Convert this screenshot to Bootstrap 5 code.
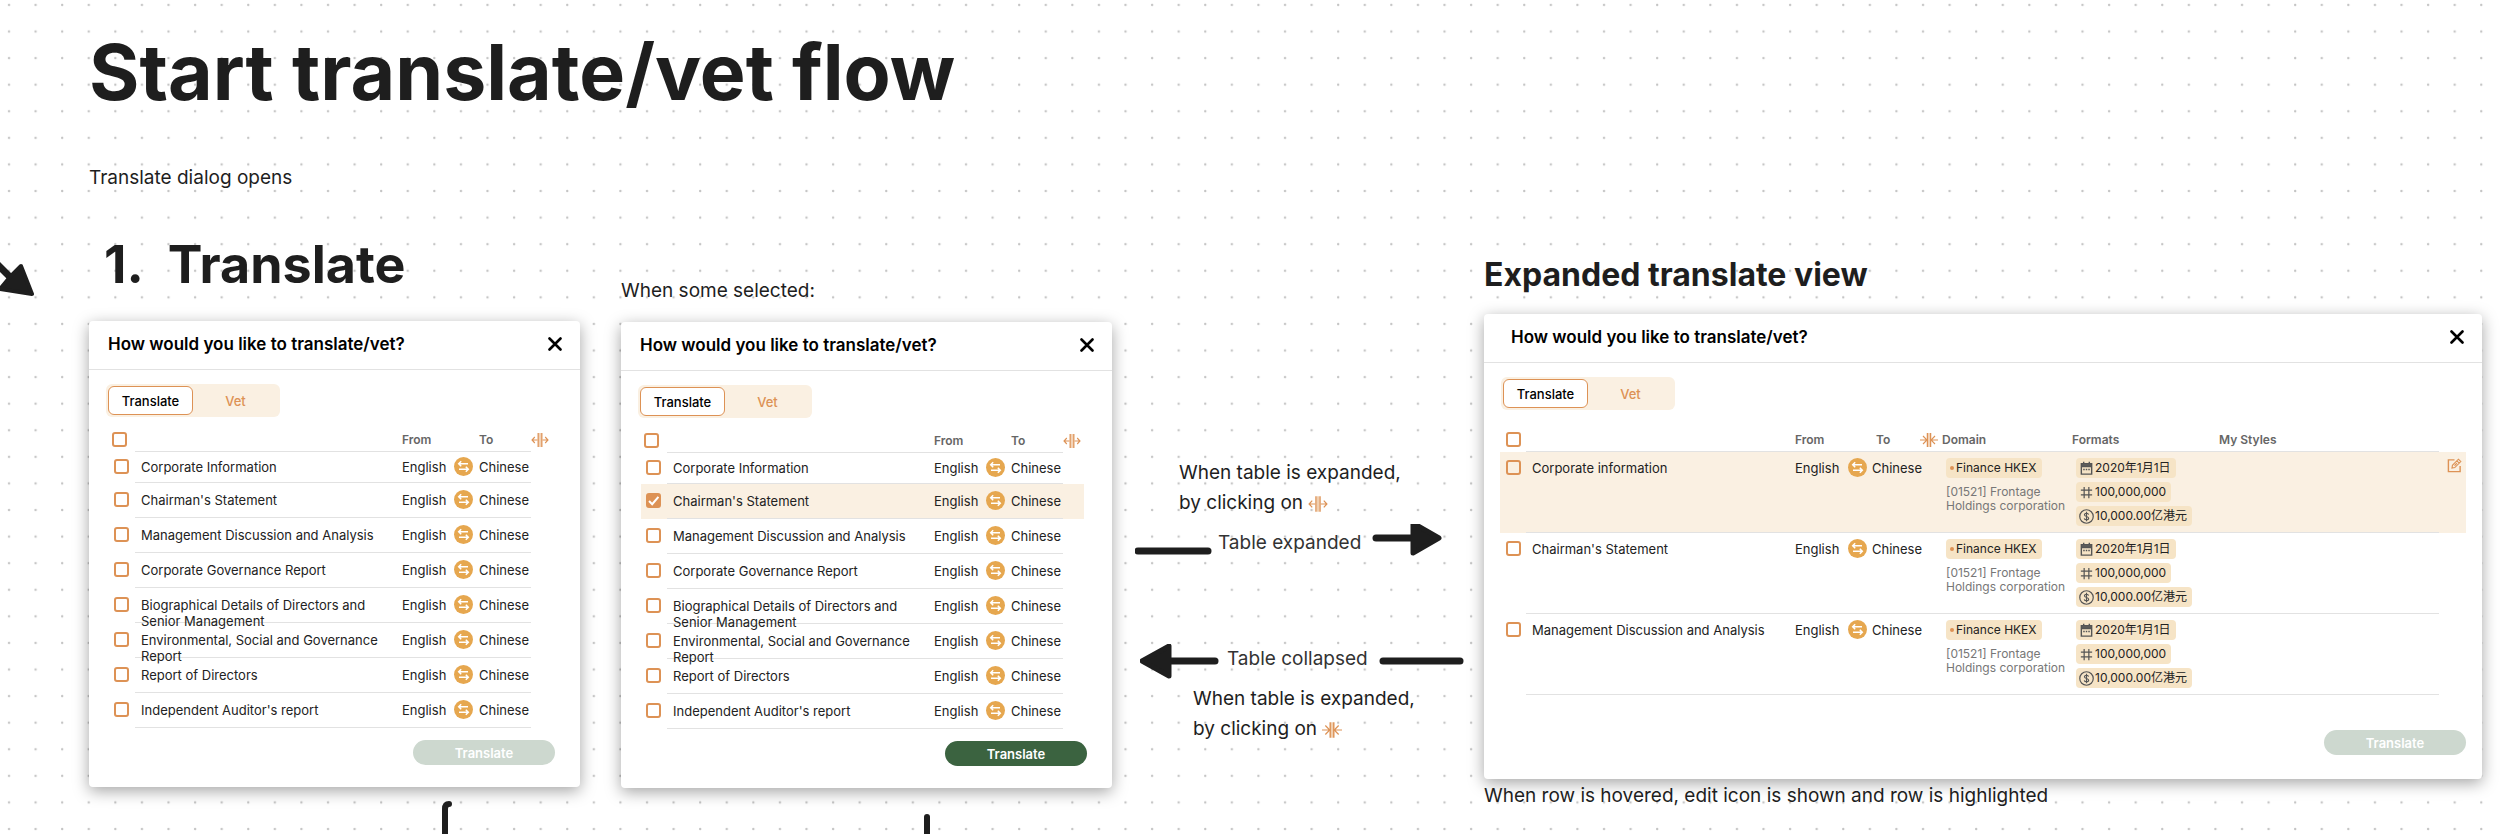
<!DOCTYPE html>
<html lang="en">
<head>
<meta charset="utf-8">
<meta name="viewport" content="width=device-width, initial-scale=1">
<title>Start translate/vet flow</title>
<link rel="stylesheet" href="https://cdn.jsdelivr.net/npm/bootstrap@5.3.0/dist/css/bootstrap.min.css">
<style>
  :root { --ink:#1e1e1e; --accent:#dd9255; --amber:#e6a74f; --cream:#faf0e2; --tag:#f6e4c6; --rule:#e2e2e2; }
  body { font-family:Inter,"Noto Sans CJK SC",sans-serif; color:var(--ink); background:#fff; overflow-x:hidden; }
  .board {
    position:relative; overflow:hidden; min-height:100vh; padding:0 22px 0 89px;
    background-image:url("data:image/svg+xml,%3Csvg xmlns='http://www.w3.org/2000/svg' width='319' height='319'%3E%3Cdefs%3E%3Cpattern id='d' width='26.583' height='26.583' patternUnits='userSpaceOnUse'%3E%3Ccircle cx='9' cy='5' r='1.2' fill='%23c4c4c4'/%3E%3C/pattern%3E%3C/defs%3E%3Crect width='319' height='319' fill='url(%23d)'/%3E%3C/svg%3E");
  }
  h1 { font-size:77px; line-height:96px; font-weight:700; margin:0; padding-top:24px; }
  .copy { font-size:19px; line-height:30px; margin:0; }
  .intro { padding-top:43px; }
  .frames { display:grid; grid-template-columns:minmax(0,491fr) minmax(0,41fr) minmax(0,491fr) minmax(0,372fr) minmax(0,998fr); padding-top:28px; }
  .frames > :nth-child(2) { grid-column:3; }
  .heading-slot { height:100px; }
  .heading-slot.lower { height:101px; padding-bottom:16px; }
  .heading-slot.upper { height:93px; padding-bottom:19px; }
  .step-title { font-size:52px; line-height:64px; font-weight:700; gap:24px; margin:0; padding:0 0 24px 15px; }
  .view-title { font-size:32px; line-height:40px; font-weight:700; margin:0; }

  .dialog { background:#fff; border-radius:4px; box-shadow:0 4px 16px rgba(0,0,0,.36); color:#222; }
  .dialog-top { height:49px; border-bottom:1px solid var(--rule); padding:0 18px 2px 19px; color:#000; }
  .dialog-top h3 { font-size:17px; line-height:24px; font-weight:600; margin:0; }
  .bare { border:0; padding:0; background:none; display:block; line-height:0; }
  .toggle { width:174px; height:33px; margin:14px 0 0 17px; padding:2px; border-radius:6px; background:var(--cream); }
  .toggle button { flex:1; border:1px solid transparent; border-radius:6px; background:none; color:var(--accent); font-size:13px; line-height:16px; font-weight:500; padding:0; }
  .toggle .on { flex:0 0 85px; background:#fff; border-color:var(--accent); color:#000; }
  .docs { table-layout:fixed; margin:0 28px 0 20px; width:calc(100% - 48px); border-collapse:separate; border-spacing:0; font-size:13px; line-height:16px; }
  .docs th, .docs td { padding:0; vertical-align:top; font-weight:400; text-align:left; }
  .docs .rule { border-bottom:1px solid var(--rule); }
  .docs thead th { height:35px; padding-top:15px; font-size:12px; line-height:16px; font-weight:600; color:#666; }
  .docs tbody td, .docs tbody th { height:35px; padding-top:9px; }
  .docs .short > * { height:31px; padding-top:7px; }
  .docs .title-cell { padding-left:6px; }
  .docs .one-line { height:16px; position:relative; z-index:1; }
  .docs .chosen { background:var(--cream); }
  .tick { appearance:none; display:block; width:15px; height:15px; margin:0 0 0 5px; border:2px solid var(--accent); border-radius:3px; background:transparent; }
  .docs thead .tick { margin-left:3px; }
  .tick:checked { background:var(--accent) url("data:image/svg+xml,%3Csvg xmlns='http://www.w3.org/2000/svg' viewBox='0 0 12 12'%3E%3Cpath d='M1.5 6.3l3 3 6-7' fill='none' stroke='white' stroke-width='2'/%3E%3C/svg%3E") center/12px no-repeat; }
  .swap { width:19px; height:19px; margin:-2px 0; display:block; }
  .go { width:142px; height:25px; border:0; border-radius:13px; background:#3b6340; color:#fff; font-size:13px; line-height:16px; font-weight:600; padding:0; }
  .go:disabled { background:#cdd8cf; color:#fff; opacity:1; }
  .dialog-foot { padding:12px 25px 22px 0; }

  .wide .dialog-top { padding-left:27px; }
  .wide .docs { margin:0 16px; width:calc(100% - 32px); }
  .wide .docs thead th { height:42px; padding-top:22px; }
  .wide .docs tbody > tr > * { height:81px; padding-top:8px; }
  .wide .docs tbody > tr > .stack { padding-top:6px; }
  .wide .dialog-foot { padding:35px 16px 24px 0; }
  .wide .docs .tick { margin-left:6px; }
  .pill { display:flex; align-items:center; width:max-content; height:20px; padding:0 5px 0 3px; border-radius:4px; background:var(--tag); font-size:12px; line-height:16px; gap:1px; color:#222; }
  .pill svg { flex:none; }
  .firm { font-size:12px; line-height:14px; color:#777; padding-top:7px; width:120px; }
  .caption-line { padding-top:2px; }

  .notes { padding-top:237px; }
  .note-a { padding-left:67px; } .note-b { padding-left:81px; padding-top:4px; }
  .flow-line { height:36px; color:#333; font-size:19px; line-height:30px; }
  .to-wide { margin-top:6px; padding-left:23px; }
  .to-narrow { margin-top:84px; padding-left:28px; }
  .edge { position:absolute; overflow:visible; }
  .edge path, .flow-line path { stroke:var(--ink); stroke-linejoin:round; stroke-linecap:round; }
</style>
</head>
<body>
<svg width="0" height="0" class="position-absolute" aria-hidden="true">
  <symbol id="i-close" viewBox="0 0 14 14"><path d="M1.5 1.5l11 11M12.500 1.500l-11 11" stroke="#000" stroke-width="2.600" stroke-linecap="round"/></symbol>
  <symbol id="i-swap" viewBox="0 0 19 19"><circle cx="9.500" cy="9.500" r="9.500" fill="#e6a74f"/><path d="M14 6.800H5M7.200 4.300L4.700 6.800l2.500 2.500M5 12.200h9M11.800 9.700l2.500 2.500-2.500 2.500" fill="none" stroke="#fff" stroke-width="1.500"/></symbol>
  <symbol id="i-expand" viewBox="0 0 18 16"><path d="M7.200 1v14M10.800 1v14" stroke="#dd9255" stroke-width="1.300"/><path d="M9 1v14" stroke="#f0c9a6" stroke-width="1.600"/><path d="M6.500 8H1M3.800 5L1 8l2.800 3M11.500 8H17M14.200 5L17 8l-2.800 3" fill="none" stroke="#dd9255" stroke-width="1.100"/></symbol>
  <symbol id="i-collapse" viewBox="0 0 18 16"><path d="M7.400 1v14M10.600 1v14" stroke="#dd9255" stroke-width="1.300"/><path d="M9 1v14" stroke="#f0c9a6" stroke-width="1.600"/><path d="M0 8h6.500M3 4L7 8l-4 4M18 8h-6.500M15 4L11 8l4 4" fill="none" stroke="#dd9255" stroke-width="1.100"/></symbol>
  <symbol id="i-cal" viewBox="0 0 16 16"><path d="M2.500 3h11v11h-11zM2.500 6h11M5 .8v3M11 .8v3" fill="none" stroke="#555" stroke-width="1.500"/><path d="M3 4.300h10" stroke="#555" stroke-width="2"/><path d="M4.500 9h1.600M7.200 9h1.600M9.900 9h1.600" stroke="#555" stroke-width="1.500"/></symbol>
  <symbol id="i-hash" viewBox="0 0 16 16"><path d="M5.500 2v12M10.500 2v12M2 5.500h12M2 10.500h12" stroke="#555" stroke-width="1.300"/></symbol>
  <symbol id="i-coin" viewBox="0 0 16 16"><circle cx="8" cy="8" r="7.200" fill="none" stroke="#555" stroke-width="1.300"/><path d="M10.200 6c-.2-1-1-1.500-2.200-1.500S5.800 5.100 5.800 6.200 6.800 7.700 8 8s2.300.6 2.300 1.800-1 1.700-2.300 1.700-2.200-.6-2.400-1.600M8 3v10" fill="none" stroke="#555" stroke-width="1.200"/></symbol>
  <symbol id="i-edit" viewBox="0 0 16 16"><path d="M8 2H1.500v12.500H14V8.500" fill="none" stroke="#dd9255" stroke-width="1.500"/><path d="M5.300 10.800l.5-3L12.200 1.300l2.500 2.500-6.400 6.400zM10.500 3l2.500 2.500M8 8.200l2.500-2.600" fill="none" stroke="#dd9255" stroke-width="1.200"/></symbol>
</svg>

<main class="board">
  <svg class="edge top-0 start-0" width="40" height="300" aria-hidden="true">
    <path d="M-4 263L10 277" fill="none" stroke-width="7"/><path d="M21 266L32 294L0 289L10 277z" fill="#1e1e1e" stroke-width="4"/>
  </svg>

  <h1>Start translate/vet flow</h1>
  <p class="copy intro">Translate dialog opens</p>

  <div class="frames">
    <section>
      <div class="heading-slot d-flex align-items-end"><h2 class="step-title d-flex"><span>1.</span><span>Translate</span></h2></div>
      <div class="dialog position-relative" data-list="a">
        <svg class="edge top-100" style="left:72%" width="12" height="60" aria-hidden="true"><path d="M6 17Q2 17 2 22V60" fill="none" stroke-width="6"/></svg>
      </div>
    </section>

    <section>
      <div class="heading-slot lower d-flex align-items-end"><p class="copy">When some selected:</p></div>
      <div class="dialog position-relative" data-list="b" data-chosen="1">
        <svg class="edge top-100" style="left:62%" width="12" height="60" aria-hidden="true"><path d="M2 29V60" fill="none" stroke-width="6"/></svg>
      </div>
    </section>

    <section class="notes">
      <p class="copy note-a">When table is expanded,<br>by clicking on <svg width="20" height="18" aria-hidden="true"><use href="#i-expand"/></svg></p>
      <div class="flow-line to-wide d-flex">
        <svg width="83" height="36" aria-hidden="true"><path d="M3 27H73" stroke-width="7"/></svg>
        <span class="pt-1">Table expanded</span>
        <svg width="80" height="36" class="ms-2" aria-hidden="true"><path d="M7 14H46" stroke-width="7"/><path d="M44 -1V29L70 14z" fill="#1e1e1e" stroke-width="5"/></svg>
      </div>
      <div class="flow-line to-narrow d-flex">
        <svg width="87" height="36" aria-hidden="true"><path d="M24 17H75" stroke-width="7"/><path d="M29 2V32L2 17z" fill="#1e1e1e" stroke-width="5"/></svg>
        <span>Table collapsed</span>
        <svg width="96" height="36" class="ms-2" aria-hidden="true"><path d="M7 17H84" stroke-width="7"/></svg>
      </div>
      <p class="copy note-b">When table is expanded,<br>by clicking on <svg width="20" height="18" aria-hidden="true"><use href="#i-collapse"/></svg></p>
    </section>

    <section>
      <div class="heading-slot upper d-flex align-items-end"><h2 class="view-title">Expanded translate view</h2></div>
      <div class="dialog wide" data-list="c" data-chosen="0"></div>
      <p class="copy caption-line">When row is hovered, edit icon is shown and row is highlighted</p>
    </section>
  </div>
</main>

<script src="https://cdn.jsdelivr.net/npm/bootstrap@5.3.0/dist/js/bootstrap.bundle.min.js"></script>
<script>
  const icon = (id, w, h = w, cls = '') => `<svg class="${cls}" width="${w}" height="${h}" aria-hidden="true"><use href="#i-${id}"/></svg>`;
  const top_ = `
    <header class="dialog-top d-flex justify-content-between align-items-center">
      <h3>How would you like to translate/vet?</h3>
      <button class="bare" aria-label="Close">${icon('close', 14)}</button>
    </header>
    <div class="toggle d-flex"><button class="on">Translate</button><button>Vet</button></div>`;
  const foot = on => `<footer class="dialog-foot d-flex justify-content-end"><button class="go" ${on ? '' : 'disabled'}>Translate</button></footer>`;
  const swap = `<button class="bare" aria-label="Swap languages">${icon('swap', 19, 19, 'swap')}</button>`;
  const names = ['Corporate Information', "Chairman's Statement", 'Management Discussion and Analysis', 'Corporate Governance Report',
    'Biographical Details of Directors and Senior Management', 'Environmental, Social and Governance Report', 'Report of Directors', "Independent Auditor's report"];

  function narrow(key, chosen) {
    const rows = names.map((n, i) => `
      <tr class="${i === 0 ? 'short' : ''} ${i === chosen ? 'chosen' : ''}">
        <td><input type="checkbox" class="tick" id="${key}${i}" ${i === chosen ? 'checked' : ''}></td>
        <th scope="row" class="rule title-cell"><label class="one-line d-block" for="${key}${i}">${n}</label></th>
        <td class="rule">English</td><td class="rule">${swap}</td><td class="rule">Chinese</td><td></td>
      </tr>`).join('');
    return `<table class="docs"><colgroup><col style="width:26px"><col><col style="width:52px"><col style="width:25px"><col style="width:52px"><col style="width:21px"></colgroup>
      <thead><tr><th><input type="checkbox" class="tick" aria-label="Select all"></th><th class="rule"></th><th class="rule">From</th><th class="rule"></th><th class="rule">To</th>
      <th><button class="bare" aria-label="Expand table">${icon('expand', 18, 16)}</button></th></tr></thead><tbody>${rows}</tbody></table>`;
  }

  function wide(key, chosen) {
    const rows = ['Corporate information', "Chairman's Statement", 'Management Discussion and Analysis'].map((n, i) => `
      <tr class="${i === chosen ? 'chosen' : ''}">
        <td><input type="checkbox" class="tick" id="${key}${i}"></td>
        <th scope="row" class="rule title-cell"><label for="${key}${i}">${n}</label></th>
        <td class="rule">English</td><td class="rule">${swap}</td><td class="rule">Chinese</td>
        <td class="rule stack"><div class="ps-1"><span class="pill"><svg width="6" height="6"><circle cx="3" cy="3" r="2" fill="#dd9255"/></svg>Finance HKEX</span>
          <div class="firm">[01521] Frontage Holdings corporation</div></div></td>
        <td class="rule stack"><div class="d-grid gap-1 ps-1"><span class="pill">${icon('cal', 15)}2020年1月1日</span><span class="pill">${icon('hash', 15)}100,000,000</span><span class="pill">${icon('coin', 15)}10,000.00亿港元</span></div></td>
        <td class="rule"></td>
        <td class="stack">${i === chosen ? `<button class="bare ps-2" aria-label="Edit row">${icon('edit', 15)}</button>` : ''}</td>
      </tr>`).join('');
    return `<table class="docs"><colgroup><col style="width:26px"><col style="width:269px"><col style="width:53px"><col style="width:24px"><col style="width:70px"><col style="width:130px"><col style="width:147px"><col><col style="width:27px"></colgroup>
      <thead><tr><th><input type="checkbox" class="tick" aria-label="Select all"></th><th class="rule"></th><th class="rule">From</th><th class="rule"></th>
      <th class="rule"><div class="d-flex"><span class="ps-1 flex-grow-1">To</span><button class="bare me-1" aria-label="Collapse table">${icon('collapse', 18, 16)}</button></div></th>
      <th class="rule">Domain</th><th class="rule">Formats</th><th class="rule">My Styles</th><th></th></tr></thead><tbody>${rows}</tbody></table>`;
  }

  document.querySelectorAll('[data-list]').forEach(el => {
    const key = el.dataset.list, chosen = el.dataset.chosen === undefined ? -1 : +el.dataset.chosen;
    el.insertAdjacentHTML('afterbegin', top_ + (key === 'c' ? wide(key, chosen) : narrow(key, chosen)) + foot(key === 'b'));
  });
</script>
</body>
</html>
